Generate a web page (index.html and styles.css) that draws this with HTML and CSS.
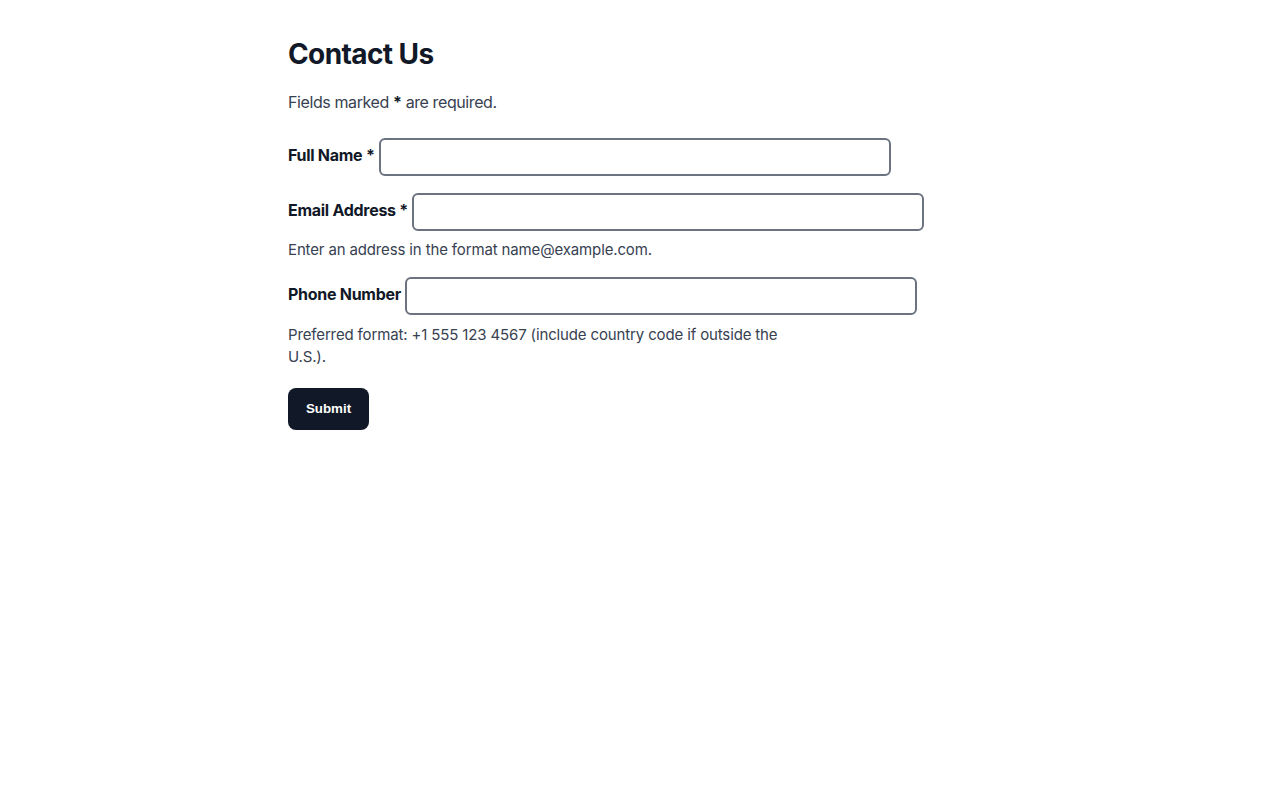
FILE: index.html
```html
<!DOCTYPE html>
<html lang="en">
<head>
<meta charset="utf-8">
<title>Contact Us</title>
<link rel="stylesheet" href="styles.css">
</head>
<body>
<main class="page">
  <h1 class="title">Contact Us</h1>
  <p class="intro">Fields marked <strong>*</strong> are required.</p>
  <form class="form">
    <div class="field">
      <label class="label" for="name">Full Name *</label>
      <input class="input" id="name" type="text">
    </div>
    <div class="field field-hinted">
      <label class="label" for="email">Email Address *</label>
      <input class="input" id="email" type="email">
      <p class="hint">Enter an address in the format name@example.com.</p>
    </div>
    <div class="field">
      <label class="label" for="phone">Phone Number</label>
      <input class="input" id="phone" type="tel">
      <p class="hint hint-last">Preferred format: +1 555 123 4567 (include country code if outside the U.S.).</p>
    </div>
    <button class="submit" type="submit">Submit</button>
  </form>
</main>
</body>
</html>
```

FILE: styles.css
```css
* { box-sizing: border-box; }
html, body { margin: 0; padding: 0; background: #ffffff; }
body {
  font-family: Inter, "Noto Sans", sans-serif;
  color: #111827;
  font-size: 16px;
  line-height: 1.5;
}
.page {
  max-width: 704px;
  margin: 0 auto;
  padding: 38px 0 32px;
}
.title {
  margin: 0 0 18px;
  font-size: 28px;
  line-height: 1.2;
  font-weight: 700;
  letter-spacing: -0.6px;
  color: #111827;
}
.intro {
  margin: 0 0 24px;
  color: #374151;
  letter-spacing: -0.4px;
}
.intro strong { color: #111827; }
.field {
  margin-bottom: 17px;
}
.field-hinted {
  margin-bottom: 16px;
}
.label {
  font-weight: 700;
  color: #111827;
  letter-spacing: -0.28px;
}
.input {
  width: 512px;
  height: 38px;
  border: 2px solid #6b7280;
  border-radius: 6px;
  padding: 6px 10px;
  font: inherit;
  vertical-align: middle;
  background: #fff;
}
.hint {
  margin: 8px 0 0;
  max-width: 512px;
  font-size: 15px;
  line-height: 22px;
  letter-spacing: -0.14px;
  color: #374151;
}
.hint-last {
  margin-top: 9px;
}
.submit {
  margin-top: 3px;
  width: 81px;
  height: 42px;
  border: 0;
  border-radius: 8px;
  background: #111827;
  color: #fff;
  font-family: "Liberation Sans", Arial, sans-serif;
  font-size: 13.33px;
  font-weight: 700;
  cursor: pointer;
}
```
